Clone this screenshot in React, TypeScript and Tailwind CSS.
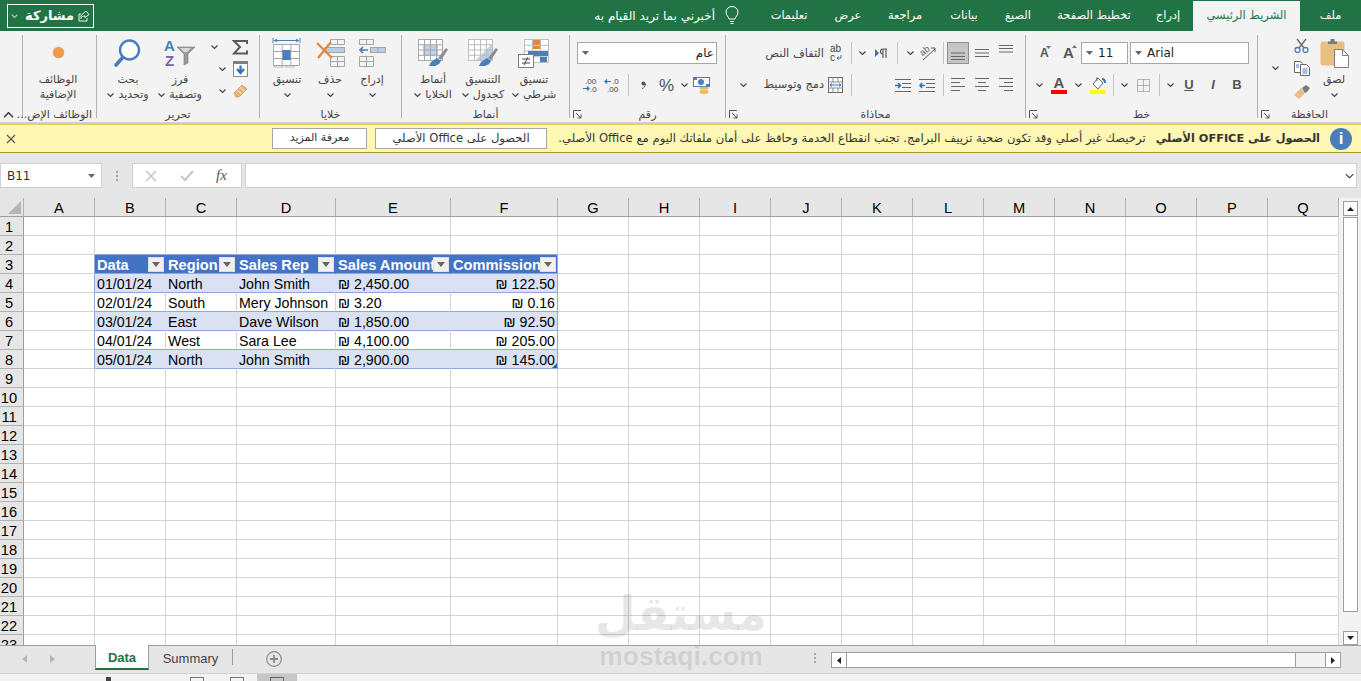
import type { ReactNode } from "react";

const ar = "font-['DejaVu_Sans','Noto_Sans',sans-serif]";
const cell = "font-['Liberation_Sans',Arial,sans-serif]";

function Chev({ up, className = "" }: { up?: boolean; className?: string }) {
  return (
    <svg width="7" height="4" viewBox="0 0 7 4" className={"shrink-0 " + className}>
      <polyline points={up ? "0.5,3.5 3.5,0.5 6.5,3.5" : "0.5,0.5 3.5,3.5 6.5,0.5"} fill="none" stroke="#444" strokeWidth="1.1" />
    </svg>
  );
}

function Caret({ className = "" }: { className?: string }) {
  return (
    <svg width="7" height="4" viewBox="0 0 7 4" className={"shrink-0 " + className}>
      <polygon points="0,0 7,0 3.5,4" fill="#666" />
    </svg>
  );
}

function Launcher() {
  return (
    <svg width="9" height="9" viewBox="0 0 9 9" className="absolute left-[3px] top-[2px]">
      <path d="M0.5 8V0.5H8M3 3l5 5M8 4.5V8H4.5" fill="none" stroke="#555" strokeWidth="1" />
    </svg>
  );
}

function Sep() {
  return <div className="w-px h-[22px] bg-[#c6c6c6] shrink-0" />;
}

function Grid({ x, y, w, h, cols, rows, stroke = "#a6a6a6" }: { x: number; y: number; w: number; h: number; cols: number; rows: number; stroke?: string }) {
  const parts: ReactNode[] = [];
  for (let i = 0; i <= cols; i++) {
    const px = x + (w * i) / cols;
    parts.push(<line key={"c" + i} x1={px} y1={y} x2={px} y2={y + h} stroke={stroke} />);
  }
  for (let i = 0; i <= rows; i++) {
    const py = y + (h * i) / rows;
    parts.push(<line key={"r" + i} x1={x} y1={py} x2={x + w} y2={py} stroke={stroke} />);
  }
  return <g>{parts}</g>;
}

function FindIcon() {
  return (
    <svg width="30" height="30" viewBox="0 0 30 30">
      <line x1="11" y1="18" x2="3" y2="27" stroke="#4a7ebb" strokeWidth="3.6" strokeLinecap="round" />
      <circle cx="16.5" cy="12" r="9.5" fill="#fff" stroke="#4a7ebb" strokeWidth="2.4" />
    </svg>
  );
}

function SortIcon() {
  return (
    <svg width="32" height="30" viewBox="0 0 32 30">
      <text x="0" y="13" fontFamily="Liberation Sans" fontWeight="700" fontSize="15" fill="#4a7ebb">A</text>
      <text x="1" y="28" fontFamily="Liberation Sans" fontWeight="700" fontSize="15" fill="#7a5fb0">Z</text>
      <path d="M13 9h18l-7 7v9l-4 2V16z" fill="#9a9a9a" stroke="#7a7a7a" strokeWidth="0.6" />
      <path d="M16 10h11l-4 4h-3z" fill="#d8d8d8" />
    </svg>
  );
}

function SumIcon() {
  return (
    <svg width="16" height="15" viewBox="0 0 16 15">
      <path d="M15 4V1H2l6 6-6 6.5h13v-3" fill="none" stroke="#5a5a5a" strokeWidth="2" />
    </svg>
  );
}

function FillIcon() {
  return (
    <svg width="15" height="16" viewBox="0 0 15 16">
      <rect x="0.5" y="0.5" width="14" height="15" fill="#fff" stroke="#8a8a8a" />
      <rect x="0" y="0" width="15" height="3" fill="#7f7f7f" />
      <path d="M7.5 4.5v7M4 8l3.5 4L11 8" fill="none" stroke="#2f74b5" strokeWidth="2.2" />
    </svg>
  );
}

function EraserIcon() {
  return (
    <svg width="15" height="14" viewBox="0 0 15 14">
      <path d="M1 9l8-8 5 4-8 8H3z" fill="#e6b87d" stroke="#c89a60" strokeWidth="0.8" />
      <path d="M4 6l5 4M7 3.5l5 4" stroke="#f6e2c4" />
    </svg>
  );
}

function FormatIcon() {
  return (
    <svg width="30" height="30" viewBox="0 0 30 30">
      <path d="M1 0v5M28 0v5" stroke="#4a7ebb" />
      <path d="M2 2.5h25M5 1l-2.5 1.5L5 4M24 1l2.5 1.5L24 4" fill="none" stroke="#4a7ebb" />
      <rect x="1.5" y="6.5" width="26" height="21" fill="#fff" />
      <Grid x={1.5} y={6.5} w={26} h={21} cols={3} rows={3} />
      <rect x="10.5" y="12" width="8" height="10" fill="#4a7ebb" />
      <path d="M2 28h9l-1 2H4zM13 28h9l-1 2h-6z" fill="#f3f3f3" stroke="#a6a6a6" strokeWidth="0.6" />
    </svg>
  );
}

function DeleteIcon() {
  return (
    <svg width="30" height="30" viewBox="0 0 30 30">
      <Grid x={15.5} y={1.5} w={14} h={5} cols={2} rows={1} />
      <rect x="10" y="9.5" width="19.5" height="5" fill="#b8cfe6" stroke="#a6a6a6" />
      <Grid x={15.5} y={18.5} w={14} h={10} cols={2} rows={2} />
      <path d="M2 5l15 15M16 4L3 20" stroke="#e08a3c" strokeWidth="2.2" />
    </svg>
  );
}

function InsertIcon() {
  return (
    <svg width="28" height="30" viewBox="0 0 28 30">
      <Grid x={1.5} y={1.5} w={14} h={5} cols={2} rows={1} />
      <rect x="12.5" y="9.5" width="15" height="5" fill="#b8cfe6" stroke="#a6a6a6" />
      <line x1="20" y1="9.5" x2="20" y2="14.5" stroke="#a6a6a6" />
      <path d="M10 12H2M5 9l-3 3 3 3" fill="none" stroke="#4a7ebb" strokeWidth="1.6" />
      <Grid x={1.5} y={18.5} w={14} h={10} cols={2} rows={2} />
    </svg>
  );
}

function Brush() {
  return (
    <g>
      <path d="M21 20l8-10 2 1.5-7 10.5z" fill="#8c8c8c" />
      <path d="M20 20l4 3-2 3-4 2h-6l2-4z" fill="#4a7ebb" />
    </g>
  );
}

function CellStyleIcon() {
  return (
    <svg width="32" height="30" viewBox="0 0 32 30">
      <rect x="1.5" y="1.5" width="24" height="21" fill="#fff" />
      <rect x="6" y="7" width="15" height="11" fill="#b8d3e6" />
      <Grid x={1.5} y={1.5} w={24} h={21} cols={4} rows={4} />
      <Brush />
    </svg>
  );
}

function TableIcon() {
  return (
    <svg width="32" height="30" viewBox="0 0 32 30">
      <rect x="1.5" y="1.5" width="24" height="21" fill="#fff" />
      <polygon points="25,6 25,22 9,22" fill="#b8d3e6" />
      <Grid x={1.5} y={1.5} w={24} h={21} cols={4} rows={4} stroke="#bdbdbd" />
      <Brush />
    </svg>
  );
}

function CondIcon() {
  return (
    <svg width="32" height="30" viewBox="0 0 32 30">
      <rect x="6.5" y="1.5" width="24" height="23" fill="#fff" />
      <Grid x={6.5} y={1.5} w={24} h={23} cols={3} rows={4} stroke="#bdbdbd" />
      <rect x="15" y="2" width="7" height="5" fill="#e08a3c" />
      <rect x="15" y="8" width="7" height="3" fill="#e08a3c" />
      <rect x="10" y="13" width="20" height="5" fill="#4a7ebb" />
      <rect x="22" y="19" width="7" height="5" fill="#4a7ebb" />
      <rect x="0.5" y="16.5" width="15" height="13" fill="#fff" stroke="#7f7f7f" />
      <path d="M4 21h8M4 25h8M10 19l-4 8" stroke="#444" />
    </svg>
  );
}

function DecIncIcon() {
  return (
    <svg width="14" height="15" viewBox="0 0 14 15" className="overflow-visible">
      <text x="2" y="6" fontFamily="Liberation Sans" fontSize="8" fill="#444">.00</text>
      <text x="7" y="14" fontFamily="Liberation Sans" fontSize="8" fill="#444">.0</text>
      <path d="M0 10.5h6M4 8.5l2 2-2 2" fill="none" stroke="#2f74b5" strokeWidth="1.2" />
    </svg>
  );
}

function DecDecIcon() {
  return (
    <svg width="14" height="15" viewBox="0 0 14 15" className="overflow-visible">
      <text x="7" y="6" fontFamily="Liberation Sans" fontSize="8" fill="#444">.0</text>
      <text x="2" y="14" fontFamily="Liberation Sans" fontSize="8" fill="#444">.00</text>
      <path d="M0 3.5h6M2 1.5l-2 2 2 2" fill="none" stroke="#2f74b5" strokeWidth="1.2" />
    </svg>
  );
}

function MoneyIcon() {
  return (
    <svg width="17" height="17" viewBox="0 0 17 17">
      <rect x="0.5" y="0.5" width="16" height="9" fill="#fff" stroke="#4a7ebb" />
      <rect x="1" y="1" width="3" height="2" fill="#4a7ebb" />
      <rect x="13" y="7" width="3" height="2" fill="#4a7ebb" />
      <circle cx="8" cy="5" r="3" fill="#4a7ebb" />
      <ellipse cx="11" cy="11" rx="4.5" ry="1.6" fill="#e6b85c" />
      <ellipse cx="11" cy="13.5" rx="4.5" ry="1.6" fill="#eec877" />
      <ellipse cx="11" cy="15.5" rx="4.5" ry="1.4" fill="#e6b85c" />
    </svg>
  );
}

function WrapIcon() {
  return (
    <svg width="12" height="18" viewBox="0 0 12 18">
      <text x="0" y="8" fontFamily="Liberation Sans" fontSize="10" fill="#444">ab</text>
      <text x="0" y="17" fontFamily="Liberation Sans" fontSize="10" fill="#444">c</text>
      <path d="M11 11v3H7M8.5 12.5L7 14l1.5 1.5" fill="none" stroke="#2f74b5" />
    </svg>
  );
}

function MergeIcon() {
  return (
    <svg width="15" height="16" viewBox="0 0 15 16">
      <rect x="0.5" y="0.5" width="14" height="15" fill="#fff" stroke="#666" />
      <path d="M0 5h15M0 11h15M5 0v5M10 0v5M5 11v5M10 11v5" stroke="#888" />
      <rect x="1" y="6" width="13" height="4" fill="#fff" />
      <path d="M2 8h11M4 6.5L2 8l2 1.5M11 6.5L13 8l-2 1.5" fill="none" stroke="#2f74b5" />
    </svg>
  );
}

function ParaIcon() {
  return (
    <svg width="13" height="11" viewBox="0 0 13 11">
      <polygon points="0,1 0,9 4,5" fill="#2f74b5" />
      <path d="M8 1h4M8 1v9M11 1v9M8 1a2.4 2.4 0 000 5" fill="none" stroke="#555" strokeWidth="1.1" />
    </svg>
  );
}

function OrientIcon() {
  return (
    <svg width="17" height="16" viewBox="0 0 17 16" className="overflow-visible">
      <text x="2" y="9" fontFamily="Liberation Sans" fontSize="9" fill="#555" transform="rotate(-40 6 8)">ab</text>
      <path d="M4 15l12-11M12 3h4v4" fill="none" stroke="#555" />
    </svg>
  );
}

function LinesIcon({ lines }: { lines: [number, number, number][] }) {
  return (
    <svg width="14" height="22" viewBox="0 0 14 22" className="shrink-0">
      {lines.map(([a, b, y]) => (
        <line key={y} x1={a} x2={b} y1={y} y2={y} stroke="#666" />
      ))}
    </svg>
  );
}

function IndentIcon({ out }: { out?: boolean }) {
  return (
    <svg width="16" height="13" viewBox="0 0 16 13">
      <path d="M0 .5h16M7 4.5h9M7 8.5h9M0 12.5h16" stroke="#666" />
      <path d={out ? "M6 6.5H1M3 4L1 6.5 3 9" : "M0 6.5h5M3 4l2.500 2.500L3 9"} fill="none" stroke="#2f74b5" strokeWidth="1.6" />
    </svg>
  );
}

function FontSizeIcon({ grow }: { grow?: boolean }) {
  return (
    <div className={"relative flex items-end justify-start text-[#555] font-bold " + cell + (grow ? " w-[14px] text-[15px] leading-[20px]" : " w-[11px] text-[12px] leading-[18px]")}>
      A
      <svg width="5" height="3" viewBox="0 0 5 3" className="absolute right-0 top-[2px]">
        <polygon points={grow ? "0,3 5,3 2.500,0" : "0,0 5,0 2.500,3"} fill="#4a7ebb" />
      </svg>
    </div>
  );
}

function Combo({ className, arrowLeft, children }: { className: string; arrowLeft?: boolean; children: ReactNode }) {
  return (
    <div className={"h-[22px] bg-white border border-[#a6a6a6] flex items-center shrink-0 " + className}>
      {arrowLeft && <Caret className="ml-[4px]" />}
      {children}
    </div>
  );
}

function BordersIcon() {
  return (
    <svg width="13" height="13" viewBox="0 0 13 13">
      <path d="M.5.500h12v12H.5zM6.500.500v12M.5 6.500h12" fill="none" stroke="#777" strokeDasharray="1 1" />
    </svg>
  );
}

function FillColorIcon() {
  return (
    <svg width="16" height="18" viewBox="0 0 16 18">
      <path d="M3 8l5-6 5 5-5 6z" fill="#fff" stroke="#666" />
      <path d="M7 1v4" stroke="#666" />
      <path d="M12 3c3 0 3 3 3 4" fill="none" stroke="#2f74b5" strokeWidth="2" />
      <rect x="0" y="14" width="16" height="4" fill="#ffff00" />
    </svg>
  );
}

function FontColorIcon() {
  return (
    <div className="w-[16px] flex flex-col items-center">
      <span className={"text-[15px] leading-[14px] font-bold text-[#555] " + cell}>A</span>
      <div className="w-[16px] h-[4px] bg-[#ff0000]" />
    </div>
  );
}

function PasteIcon() {
  return (
    <svg width="29" height="30" viewBox="0 0 29 30">
      <rect x="0.5" y="3.500" width="24" height="24" rx="2" fill="#e8bf82" />
      <path d="M8 3.500h9V6H8z M10.500 1h4v3h-4z" fill="#7a7a7a" />
      <path d="M14.500 11.500h8l6 6v12h-14z" fill="#fff" stroke="#7f7f7f" />
      <path d="M22.500 11.500v6h6" fill="none" stroke="#7f7f7f" />
    </svg>
  );
}

function ScissorsIcon() {
  return (
    <svg width="15" height="15" viewBox="0 0 15 15">
      <path d="M3 1l7 9M12 1L5 10" stroke="#666" strokeWidth="1.3" />
      <circle cx="3.500" cy="12" r="2.500" fill="none" stroke="#4a7ebb" strokeWidth="1.3" />
      <circle cx="11.500" cy="12" r="2.500" fill="none" stroke="#4a7ebb" strokeWidth="1.3" />
    </svg>
  );
}

function CopyIcon() {
  return (
    <svg width="16" height="15" viewBox="0 0 16 15">
      <path d="M.5.500h6l2 2v9H.5z" fill="#fff" stroke="#666" />
      <path d="M6.500 3.500h6l3 3v8h-9z" fill="#fff" stroke="#666" />
      <path d="M8.500 8h5M8.500 10h5M8.500 12h5M2 4h3M2 6h3" stroke="#4a7ebb" />
    </svg>
  );
}

function PainterIcon() {
  return (
    <svg width="17" height="14" viewBox="0 0 17 14">
      <path d="M1 10l7-7 4 5-6 6z" fill="#e8bf82" />
      <path d="M9 3l4-3 4 3-3 4-2 1z" fill="#7a7a7a" />
    </svg>
  );
}

function Big({ className, icon, l1, l2, chev }: { className: string; icon: ReactNode; l1: string; l2?: string; chev?: boolean }) {
  return (
    <div className={"flex flex-col items-center shrink-0 " + className}>
      <div className="h-[37px] flex items-start pt-[3px] justify-center">{icon}</div>
      <div className="h-[15px] leading-[15px] whitespace-nowrap">{l1}</div>
      <div className="h-[15px] leading-[15px] whitespace-nowrap flex items-center justify-center gap-[4px]">
        {chev && <Chev />}
        {l2 && <span>{l2}</span>}
      </div>
    </div>
  );
}

function Group({ className, label, launcher, children, labelClass = "" }: { className: string; label?: string; launcher?: boolean; children: ReactNode; labelClass?: string }) {
  return (
    <div className={"h-[83px] shrink-0 border-r border-[#b1b1b1] " + className}>
      <div className="h-[73px] flex">{children}</div>
      <div dir="rtl" className={"relative h-[10px] text-center leading-[14px] text-[11px] text-[#444] whitespace-nowrap " + labelClass}>
        {launcher && <Launcher />}
        {label}
      </div>
    </div>
  );
}

function TopBar() {
  const tabs = [
    ["تعليمات", "w-[68px]"],
    ["عرض", "w-[50px]"],
    ["مراجعة", "w-[64px]"],
    ["بيانات", "w-[54px]"],
    ["الصيغ", "w-[54px]"],
    ["تخطيط الصفحة", "w-[98px]"],
    ["إدراج", "w-[50px]"],
  ];
  return (
    <div className={"h-[31px] bg-[#217346] text-white text-[11.4px] flex items-center " + ar}>
      <div className="ml-[7px] w-[87px] h-[24px] border border-white flex items-center">
        <Chev className="ml-[3px] invert" />
        <span className="ml-[7px] text-[13px] font-bold">مشاركة</span>
        <svg width="12" height="12" viewBox="0 0 12 12" className="ml-[4px]">
          <path d="M3 5.500L8 1l3 3.500-4 3V6C5 6 3.500 7 3 8.500zM9 8v3H1V4h2" fill="none" stroke="#fff" strokeWidth="0.9" />
        </svg>
      </div>
      <div className="flex-1" />
      <span className="text-[12px] whitespace-nowrap">أخبرني بما تريد القيام به</span>
      <svg width="16" height="19" viewBox="0 0 16 19" className="ml-[9px] mr-[15px]">
        <path d="M5 13c0-2-3-3.500-3-7a6 5.500 0 0112 0c0 3.500-3 5-3 7zM6 15.500h4M6.500 17.500h3" fill="none" stroke="#fff" />
      </svg>
      {tabs.map(([t, w]) => (
        <div key={t} className={"text-center whitespace-nowrap " + w}>{t}</div>
      ))}
      <div className="w-[107px] h-[30px] mt-[1px] bg-[#f3f3f3] text-[#217346] flex items-center justify-center">الشريط الرئيسي</div>
      <div className="w-[61px] text-center">ملف</div>
    </div>
  );
}

function Ribbon() {
  const big = "text-[11px] text-[#444]";
  return (
    <div className={"h-[92px] bg-[#f3f3f3] pt-[4px] flex text-[#444] border-b border-[#d2d2d2] " + ar}>
      <Group className="w-[23px]">
        <div className="flex-1 relative">
          <Chev up className="absolute left-[5px] top-[78px] scale-150" />
        </div>
      </Group>
      <Group className="w-[74px]" label="الوظائف الإض..." labelClass="text-[10px] pr-[4px]">
        <div className={"w-[70px] " + big}>
          <Big className="w-full" l1="الوظائف" l2="الإضافية"
            icon={<div className="mt-[9px] w-[11px] h-[11px] rounded-full bg-[#ed9a4b] shadow-[0_0_2px_#e9c7a4]" />} />
        </div>
      </Group>
      <Group className="w-[163px]" label="تحرير">
        <Big className={"w-[44px] ml-[9px] " + big} icon={<FindIcon />} l1="بحث" l2="وتحديد" chev />
        <Big className={"w-[44px] ml-[8px] " + big} icon={<SortIcon />} l1="فرز" l2="وتصفية" chev />
        <div className="ml-[3px] w-[43px] pt-[1px] flex flex-col">
          <div className="h-[22px] flex items-center justify-end"><Chev className="mr-[14px]" /><SumIcon /></div>
          <div className="h-[22px] flex items-center justify-end"><Chev className="mr-[7px]" /><FillIcon /></div>
          <div className="h-[22px] flex items-center justify-end"><Chev className="mr-[7px]" /><EraserIcon /></div>
        </div>
      </Group>
      <Group className="w-[142px]" label="خلايا">
        <Big className={"w-[42px] ml-[6px] " + big} icon={<FormatIcon />} l1="تنسيق" chev />
        <Big className={"w-[42px] ml-[1px] " + big} icon={<DeleteIcon />} l1="حذف" chev />
        <Big className={"w-[42px] ml-[0px] " + big} icon={<InsertIcon />} l1="إدراج" chev />
      </Group>
      <Group className="w-[168px]" label="أنماط">
        <Big className={"w-[50px] ml-[6px] " + big} icon={<CellStyleIcon />} l1="أنماط" l2="الخلايا" chev />
        <Big className={"w-[50px] " + big} icon={<TableIcon />} l1="التنسيق" l2="كجدول" chev />
        <Big className={"w-[50px] ml-[1px] " + big} icon={<CondIcon />} l1="تنسيق" l2="شرطي" chev />
      </Group>
      <Group className="w-[156px]" label="رقم" launcher>
        <div className="flex flex-col pt-[7px]">
          <Combo className="ml-[7px] w-[140px]" arrowLeft>
            <span className="ml-auto mr-[2px] text-[12px] text-[#222]">عام</span>
          </Combo>
          <div className="h-[22px] mt-[10px] flex items-center">
            <div className="ml-[13px]"><DecIncIcon /></div>
            <div className="ml-[8px]"><DecDecIcon /></div>
            <div className="ml-[9px]"><Sep /></div>
            <svg width="5" height="8" viewBox="0 0 5 8" className="ml-[12px]">
              <circle cx="2.500" cy="2.500" r="2" fill="#555" />
              <path d="M4.500 3C4.500 5 3 7 1 7.500" fill="none" stroke="#555" />
            </svg>
            <span className={"ml-[13px] w-[14px] text-[17px] leading-none text-[#555] " + cell}>%</span>
            <Chev className="ml-[8px]" />
            <div className="ml-[5px]"><MoneyIcon /></div>
          </div>
        </div>
      </Group>
      <Group className="w-[300px]" label="محاذاة" launcher>
        <div className="flex flex-col pt-[7px] text-[11.4px]">
          <div className="h-[22px] flex items-center">
            <div className="w-[100px] pr-[2px] pt-[2px] text-right whitespace-nowrap">التفاف النص</div>
            <div className="ml-[4px]"><WrapIcon /></div>
            <div className="ml-[9px]"><Sep /></div>
            <Chev className="ml-[7px]" />
            <div className="ml-[9px]"><ParaIcon /></div>
            <div className="ml-[9px]"><Sep /></div>
            <Chev className="ml-[9px]" />
            <div className="ml-[5px]"><OrientIcon /></div>
            <div className="ml-[7px]"><Sep /></div>
            <div className="ml-[3px] w-[22px] h-[22px] bg-[#c6c6c6] border border-[#8f8f8f] flex items-center justify-center">
              <LinesIcon lines={[[0, 14, 11], [0, 14, 14.5], [0, 14, 17.5]]} />
            </div>
            <div className="ml-[6px]"><LinesIcon lines={[[0, 14, 7.5], [0, 14, 11], [0, 14, 14.5]]} /></div>
            <div className="ml-[10px]"><LinesIcon lines={[[0, 14, 3.5], [0, 14, 6.5], [0, 14, 10]]} /></div>
          </div>
          <div className="h-[22px] mt-[10px] flex items-center">
            <Chev className="ml-[14px]" />
            <div className="w-[79px] pr-[2px] text-right whitespace-nowrap">دمج وتوسيط</div>
            <div className="ml-[2px]"><MergeIcon /></div>
            <div className="ml-[8px]"><Sep /></div>
            <div className="ml-[43px]"><IndentIcon /></div>
            <div className="ml-[8px]"><IndentIcon out /></div>
            <div className="ml-[8px]"><Sep /></div>
            <div className="ml-[7px]"><LinesIcon lines={[[0, 14, 4.5], [0, 9, 8.5], [0, 14, 12.5], [0, 9, 16.5]]} /></div>
            <div className="ml-[10px]"><LinesIcon lines={[[0, 14, 4.5], [3, 11, 8.5], [0, 14, 12.5], [3, 11, 16.5]]} /></div>
            <div className="ml-[10px]"><LinesIcon lines={[[0, 14, 4.5], [5, 14, 8.5], [0, 14, 12.5], [5, 14, 16.5]]} /></div>
          </div>
        </div>
      </Group>
      <Group className="w-[232px]" label="خط" launcher>
        <div className="flex flex-col pt-[7px]">
          <div className="h-[22px] flex items-center">
            <div className="ml-[14px]"><FontSizeIcon /></div>
            <div className="ml-[12px]"><FontSizeIcon grow /></div>
            <Combo className="ml-[4px] w-[47px]" arrowLeft>
              <span className="ml-[5px] text-[12px] text-[#222]">11</span>
            </Combo>
            <Combo className="ml-[2px] w-[119px]" arrowLeft>
              <span className="ml-[5px] text-[12px] text-[#222]">Arial</span>
            </Combo>
          </div>
          <div className="h-[22px] mt-[10px] flex items-center">
            <Chev className="ml-[10px]" />
            <div className="ml-[8px]"><FontColorIcon /></div>
            <Chev className="ml-[8px]" />
            <div className="ml-[8px]"><FillColorIcon /></div>
            <div className="ml-[7px]"><Sep /></div>
            <Chev className="ml-[7px]" />
            <div className="ml-[9px]"><BordersIcon /></div>
            <div className="ml-[9px]"><Sep /></div>
            <Chev className="ml-[7px]" />
            <span className={"ml-[8px] w-[14px] text-center text-[13px] font-bold underline text-[#555] " + cell}>U</span>
            <span className={"ml-[10px] w-[14px] text-center text-[13px] font-bold italic text-[#555] " + cell}>I</span>
            <span className={"ml-[10px] w-[14px] text-center text-[13px] font-bold text-[#555] " + cell}>B</span>
          </div>
        </div>
      </Group>
      <Group className="flex-1 border-r-0" label="الحافظة" launcher>
        <Chev className="ml-[14px] mt-[31px]" />
        <div className="ml-[14px] w-[17px] -mt-[1px] flex flex-col">
          <div className="h-[23px] flex items-center justify-center"><ScissorsIcon /></div>
          <div className="h-[23px] flex items-center justify-center"><CopyIcon /></div>
          <div className="h-[23px] flex items-center justify-center"><PainterIcon /></div>
        </div>
        <Big className={"w-[32px] ml-[8px] " + big} icon={<PasteIcon />} l1="لصق" chev />
      </Group>
    </div>
  );
}

function MessageBar() {
  return (
    <div className={"h-[30px] bg-[#fff8b5] border-t-2 border-t-[#e6cf6b] border-b border-b-[#a98f27] flex items-center text-[11px] text-[#333] " + ar}>
      <svg width="10" height="10" viewBox="0 0 10 10" className="ml-[6px]">
        <path d="M1 1l8 8M9 1L1 9" stroke="#555" strokeWidth="1.1" />
      </svg>
      <div className="ml-[256px] w-[95px] h-[21px] bg-white border border-[#a6a6a6] flex items-center justify-center">معرفة المزيد</div>
      <div dir="rtl" className="ml-[8px] w-[172px] h-[21px] text-[11.6px] bg-white border border-[#a6a6a6] flex items-center justify-center">الحصول على Office الأصلي</div>
      <div dir="rtl" className="flex-1 pt-[1px] text-[11.6px] text-right whitespace-nowrap overflow-hidden">ترخيصك غير أصلي وقد تكون ضحية تزييف البرامج. تجنب انقطاع الخدمة وحافظ على أمان ملفاتك اليوم مع Office الأصلي.</div>
      <div dir="rtl" className="ml-[10px] pt-[1px] text-[11.3px] font-bold whitespace-nowrap">الحصول على OFFICE الأصلي</div>
      <div className={"ml-[10px] mr-[9px] w-[22px] h-[22px] rounded-full bg-[#4a7ebb] text-white text-[17px] font-bold flex items-center justify-center " + cell}>i</div>
    </div>
  );
}

function FormulaBar() {
  return (
    <div className="h-[45px] bg-[#e6e6e6] pt-[10px] flex">
      <div className="w-[102px] h-[25px] bg-white border border-[#d0d0d0] flex items-center justify-between px-[6px]">
        <span className={"text-[12px] text-[#333] " + ar}>B11</span>
        <Caret />
      </div>
      <div className="w-[30px] h-[25px] flex flex-col items-center justify-center gap-[2px]">
        <div className="w-[2px] h-[2px] bg-[#a6a6a6]" />
        <div className="w-[2px] h-[2px] bg-[#a6a6a6]" />
        <div className="w-[2px] h-[2px] bg-[#a6a6a6]" />
      </div>
      <div className="w-[110px] h-[25px] bg-white border border-[#d0d0d0] flex items-center">
        <svg width="12" height="12" viewBox="0 0 12 12" className="ml-[12px]"><path d="M1 1l10 10M11 1L1 11" stroke="#c6c6c6" strokeWidth="1.500" /></svg>
        <svg width="14" height="12" viewBox="0 0 14 12" className="ml-[23px]"><path d="M1 6l4 4 8-9" fill="none" stroke="#c6c6c6" strokeWidth="2" /></svg>
        <span className="ml-[22px] text-[15px] italic font-['Liberation_Serif',serif] text-[#555]">fx</span>
      </div>
      <div className="ml-[3px] w-[1112px] h-[25px] bg-white border border-[#d0d0d0] flex items-center justify-end pr-[3px]">
        <Chev className="scale-125" />
      </div>
    </div>
  );
}

const columns = ["A", "B", "C", "D", "E", "F", "G", "H", "I", "J", "K", "L", "M", "N", "O", "P", "Q"];

const tableRows: Record<number, string[]> = {
  3: ["Data", "Region", "Sales Rep", "Sales Amount", "Commission"],
  4: ["01/01/24", "North", "John Smith", "₪ 2,450.00", "₪ 122.50"],
  5: ["02/01/24", "South", "Mery Johnson", "₪ 3.20", "₪ 0.16"],
  6: ["03/01/24", "East", "Dave Wilson", "₪ 1,850.00", "₪ 92.50"],
  7: ["04/01/24", "West", "Sara Lee", "₪ 4,100.00", "₪ 205.00"],
  8: ["05/01/24", "North", "John Smith", "₪ 2,900.00", "₪ 145.00"],
};

function SheetCell({ r, c }: { r: number; c: number }) {
  const row = tableRows[r];
  const inTable = !!row && c >= 1 && c <= 5;
  const band = r === 4 || r === 6 || r === 8;
  let cls = "relative border-r border-b whitespace-nowrap overflow-hidden px-[2px] leading-[20px] text-black ";
  if (inTable) {
    cls += "border-b-[#8ea9db] ";
    if (c === 5) cls += "border-r-[#8ea9db] ";
    else if (r === 3) cls += "border-r-[#4472c4] ";
    else if (band) cls += "border-r-[#d9e1f2] ";
    else cls += "border-r-[#d4d4d4] ";
    if (r === 3) cls += "bg-[#4472c4] text-white font-bold text-[14.67px] ";
    else if (band) cls += "bg-[#d9e1f2] text-[14.2px] ";
    else cls += "bg-white text-[14.2px] ";
    if (r > 3 && c === 5) cls += "text-right ";
  } else {
    cls += r === 2 && c >= 1 && c <= 5 ? "border-b-[#8ea9db] " : "border-b-[#d4d4d4] ";
    cls += !!row && c === 0 ? "border-r-[#8ea9db] " : "border-r-[#d4d4d4] ";
    cls += "bg-white ";
  }
  return (
    <div className={cls}>
      {inTable && row[c - 1]}
      {inTable && r === 3 && (
        <div className="absolute right-[1px] top-[2px] w-[16px] h-[15px] bg-[#f0f0f0] border border-[#e0e0e0] flex items-center justify-center">
          <svg width="8" height="5" viewBox="0 0 8 5"><polygon points="0,0 8,0 4,5" fill="#666" /></svg>
        </div>
      )}
      {inTable && r === 8 && c === 5 && (
        <svg width="5" height="5" viewBox="0 0 5 5" className="absolute right-0 bottom-0">
          <polygon points="5,0 5,5 0,5" fill="#2f5fb3" />
        </svg>
      )}
    </div>
  );
}

function Sheet() {
  const rows = Array.from({ length: 23 }, (_, i) => i + 1);
  return (
    <div className="h-[447px] flex overflow-hidden bg-[#f3f3f3]">
      <div className={"w-[1339px] h-[447px] overflow-hidden grid grid-cols-[24px_71px_71px_71px_99px_115px_107px_repeat(11,71px)] auto-rows-[19px] " + cell}>
        <div className="bg-[#e6e6e6] border-r border-b border-r-[#b1b1b1] border-b-[#9e9e9e] flex items-end justify-end p-[2px]">
          <svg width="13" height="13" viewBox="0 0 13 13"><polygon points="13,0 13,13 0,13" fill="#b5b5b5" /></svg>
        </div>
        {columns.map((col) => (
          <div key={col} className="bg-[#e6e6e6] border-r border-b border-r-[#b1b1b1] border-b-[#9e9e9e] text-center text-[14.67px] leading-[20px] text-black">{col}</div>
        ))}
        {rows.map((r) => (
          <div key={r} className="contents">
            <div className="bg-[#e6e6e6] border-r border-b border-r-[#9e9e9e] border-b-[#b1b1b1] text-[14.67px] leading-[20px] text-black overflow-hidden">
              <div className="w-[18px] text-center">{r}</div>
            </div>
            {columns.map((col, c) => (
              <SheetCell key={col} r={r} c={c} />
            ))}
          </div>
        ))}
      </div>
      <div className="w-[22px] pl-[4px] pt-[3px] flex flex-col">
        <div className="w-[15px] h-[15px] bg-white border border-[#9e9e9e] flex items-center justify-center">
          <svg width="7" height="4" viewBox="0 0 7 4"><polygon points="0,4 7,4 3.500,0" fill="#222" /></svg>
        </div>
        <div className="w-[15px] h-[395px] mt-[1px] bg-white border border-[#9e9e9e]" />
        <div className="flex-1" />
        <div className="w-[15px] h-[14px] bg-white border border-[#9e9e9e] flex items-center justify-center">
          <svg width="7" height="4" viewBox="0 0 7 4"><polygon points="0,0 7,0 3.500,4" fill="#222" /></svg>
        </div>
      </div>
    </div>
  );
}

function TabBar() {
  return (
    <div className={"h-[28px] bg-[#e6e6e6] border-t border-[#9e9e9e] flex items-start relative " + cell}>
      <svg width="5" height="8" viewBox="0 0 5 8" className="ml-[22px] mt-[9px]"><polygon points="5,0 5,8 0,4" fill="#b5b5b5" /></svg>
      <svg width="5" height="8" viewBox="0 0 5 8" className="ml-[23px] mt-[9px]"><polygon points="0,0 0,8 5,4" fill="#b5b5b5" /></svg>
      <div className="ml-[40px] -mt-[1px] w-[54px] h-[25px] pt-[2px] bg-white border-l border-r border-[#9e9e9e] border-b-2 border-b-[#217346] text-[13px] font-bold text-[#217346] flex items-center justify-center">Data</div>
      <div className="w-[83px] h-[24px] pt-[1px] text-[13px] text-[#444] flex items-center justify-center">Summary</div>
      <div className="w-px h-[16px] mt-[3px] bg-[#9e9e9e]" />
      <svg width="16" height="16" viewBox="0 0 16 16" className="ml-[33px] mt-[5px]">
        <circle cx="8" cy="8" r="7.300" fill="none" stroke="#8a8a8a" strokeWidth="1.200" />
        <path d="M8 4v8M4 8h8" stroke="#8a8a8a" strokeWidth="1.800" />
      </svg>
      <div className="ml-[532px] mt-[7px] flex flex-col gap-[2px]">
        <div className="w-[2px] h-[2px] bg-[#a6a6a6]" />
        <div className="w-[2px] h-[2px] bg-[#a6a6a6]" />
        <div className="w-[2px] h-[2px] bg-[#a6a6a6]" />
      </div>
      <div className="ml-[15px] mt-[6px] w-[510px] h-[16px] flex bg-[#f3f3f3] border border-[#9e9e9e]">
        <div className="w-[15px] bg-white border-r border-[#9e9e9e] flex items-center justify-center">
          <svg width="4" height="7" viewBox="0 0 4 7"><polygon points="4,0 4,7 0,3.500" fill="#222" /></svg>
        </div>
        <div className="w-[449px] bg-white border-r border-[#9e9e9e]" />
        <div className="flex-1" />
        <div className="w-[15px] bg-white border-l border-[#9e9e9e] flex items-center justify-center">
          <svg width="4" height="7" viewBox="0 0 4 7"><polygon points="0,0 0,7 4,3.500" fill="#222" /></svg>
        </div>
      </div>
    </div>
  );
}

function StatusBar() {
  return (
    <div className="h-[8px] bg-[#f3f3f3] border-t border-[#d2d2d2] overflow-hidden flex">
      <div className="ml-[106px] mt-[3px] w-[5px] h-[4px] bg-[#444]" />
      <div className="ml-[79px] mt-[3px] w-[14px] h-[8px] border border-[#777]" />
      <div className="ml-[26px] mt-[3px] w-[14px] h-[8px] border border-[#777]" />
      <div className="ml-[13px] w-[40px] h-[8px] bg-[#c6c6c6] flex justify-center">
        <div className="mt-[3px] w-[14px] h-[8px] border border-[#666]" />
      </div>
    </div>
  );
}

export default function App() {
  return (
    <div className="relative w-[1361px] h-[681px] overflow-hidden bg-white">
      <TopBar />
      <Ribbon />
      <MessageBar />
      <FormulaBar />
      <Sheet />
      <TabBar />
      <StatusBar />
      <div className="absolute left-[597px] top-[578px] w-[168px] flex flex-col items-center pointer-events-none text-black/10">
        <div className="text-[47px] leading-[72px] font-bold font-['DejaVu_Sans',sans-serif] whitespace-nowrap">مستقل</div>
        <div className={"text-[26.500px] leading-[24px] -mt-[6px] font-bold whitespace-nowrap " + cell}>mostaqi.com</div>
      </div>
    </div>
  );
}
